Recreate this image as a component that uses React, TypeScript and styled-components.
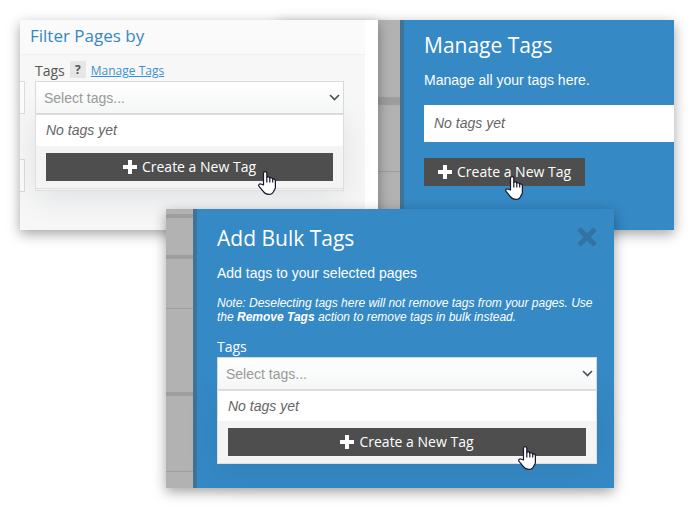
import React from "react";
import styled, { createGlobalStyle } from "styled-components";

const GlobalStyle = createGlobalStyle`
  * { box-sizing: border-box; }
  body {
    margin: 0;
    background: #fff;
    color: #555;
    font: 14px/20px "Liberation Sans", Arial, sans-serif;
  }
  h2, p { margin: 0; }
`;

const display = `"Open Sans", "Noto Sans", sans-serif`;

const Stage = styled.main`
  display: grid;
  grid-template-columns: 146fr 112fr 100fr 236fr 60fr;
  grid-template-rows: auto 21px auto;
  padding: 20px;
`;

const panelShadow = "0 4px 12px rgba(0, 0, 0, 0.36)";

const FilterPanel = styled.section`
  grid-column: 1 / 4;
  grid-row: 1 / 3;
  z-index: 1;
  display: flex;
  overflow: hidden;
  background: #fff;
  box-shadow: ${panelShadow};
`;

const FilterMain = styled.div`
  flex: 1;
  margin-right: 13px;
  background: #f7f7f7;
`;

const FilterTitle = styled.h2`
  height: 35px;
  padding: 0 10px;
  border-bottom: 1px solid #f0f0f0;
  background: #fafafa;
  color: #3588c4;
  font: 400 17px/32px ${display};
`;

const FilterBody = styled.div`
  display: flex;
  gap: 10px;
  padding: 0 21px 38px 0;
`;

const Neighbours = styled.div`
  display: flex;
  flex-direction: column;
  gap: 45px;
  width: 5px;
  padding-top: 26px;
`;

const FieldEdge = styled.div`
  height: 33px;
  border: 1px solid #dcdcdc;
  border-left: 0;
  background: #fcfcfc;
`;

const Field = styled.div`
  flex: 1;
`;

const LabelRow = styled.div`
  display: flex;
  align-items: center;
  gap: 5px;
  height: 26px;
  padding-top: 6px;
`;

const FieldLabel = styled.label`
  font: 400 14px/20px ${display};
`;

const Help = styled.button`
  width: 16px;
  height: 17px;
  margin-bottom: 3px;
  padding: 0;
  border: 0;
  background: #e6e6e6;
  color: #555;
  font: 700 12px/17px ${display};
`;

const ManageLink = styled.a`
  color: #3c91d4;
  font: 400 12px/20px ${display};
`;

const SelectWrap = styled.div`
  position: relative;
`;

const TagSelect = styled.select`
  display: block;
  width: 100%;
  height: 33px;
  padding: 0 8px;
  border: 1px solid #d8dadb;
  border-radius: 0;
  background: linear-gradient(#fff, #f5f6f6);
  color: #999;
  font: 14px/20px "Liberation Sans", Arial, sans-serif;
  appearance: none;
`;

const Chevron = styled.svg`
  position: absolute;
  top: 13px;
  right: 4px;
  width: 11px;
  height: 7px;
  pointer-events: none;
`;

const Dropdown = styled.div`
  border: 1px solid #dedede;
  background: #f4f4f4;
  box-shadow: 0 6px 32px rgba(40, 60, 70, 0.12);
`;

const Empty = styled.p<{ $size: "snug" | "normal" | "roomy" }>`
  padding: ${(p) =>
    ({ snug: "5px 10px", normal: "5px 10px 6px", roomy: "8px 10px 9px" })[p.$size]};
  background: #fff;
  color: #666;
  font-style: italic;
`;

const DropdownFoot = styled.div<{ $framed?: boolean }>`
  padding: 7px 10px;
  border-bottom: ${(p) => (p.$framed ? "1px solid #dedede" : "0")};
  margin-bottom: ${(p) => (p.$framed ? "1px" : "0")};
`;

const CreateButton = styled.button<{ $wide?: boolean }>`
  position: relative;
  display: flex;
  align-items: center;
  justify-content: center;
  gap: 5px;
  width: ${(p) => (p.$wide ? "100%" : "auto")};
  height: 28px;
  padding: 0 14px;
  border: 0;
  background: #4e4e4e;
  color: #fff;
  font: 400 14px/28px ${display};
  white-space: nowrap;
`;

const Cursor = styled.svg<{ $right: number }>`
  position: absolute;
  top: 18px;
  right: ${(p) => p.$right}px;
  z-index: 2;
  width: 18px;
  height: 24px;
`;

const ManagePanel = styled.section`
  grid-column: 3 / 6;
  grid-row: 1 / 3;
  display: flex;
  box-shadow: ${panelShadow};
`;

const BulkPanel = styled.section`
  grid-column: 2 / 5;
  grid-row: 2 / 4;
  z-index: 2;
  display: flex;
  box-shadow: ${panelShadow};
`;

const Backdrop = styled.div<{ $width: number }>`
  display: flex;
  flex-direction: column;
  flex: none;
  width: ${(p) => p.$width}px;
  background: #b2b2b2;
`;

const BackdropRow = styled.div<{ $height: number; $line: number }>`
  height: ${(p) => p.$height}px;
  border-bottom: ${(p) => p.$line}px solid #9e9e9e;
`;

const Sheet = styled.div<{ $top: number; $right: number }>`
  flex: 1;
  padding: ${(p) => p.$top}px ${(p) => p.$right}px 24px 20px;
  border-left: 4px solid #3f7397;
  background: #3589c5;
  color: #fff;
`;

const SheetHead = styled.div`
  display: flex;
  align-items: flex-start;
  justify-content: space-between;
`;

const SheetTitle = styled.h2`
  font: 400 21px/28px ${display};
`;

const Lead = styled.p`
  margin-top: 11px;
`;

const Note = styled.p`
  margin-top: 13px;
  font-size: 12px;
  line-height: 14px;
  font-style: italic;
`;

const SheetLabel = styled(FieldLabel)`
  display: block;
  margin-top: 13px;
`;

const TagList = styled.div`
  margin: 15px 0 16px;
`;

const CloseButton = styled.button`
  display: flex;
  margin-top: 3px;
  padding: 0;
  border: 0;
  background: none;
`;

const Plus = () => (
  <svg width="14" height="14" viewBox="0 0 14 14" aria-hidden="true">
    <path d="M5 0h4v5h5v4H9v5H5V9H0V5h5z" fill="#fff" />
  </svg>
);

const Hand = ({ right }: { right: number }) => (
  <Cursor $right={right} viewBox="0 0 18 24" aria-hidden="true">
    <path
      d="M5.5 14V2.2C5.5.2 8.8.2 8.8 2.2V6.5C9.6 5.3 11.7 5.7 11.8 7.1C12.8 6.3 14.5 6.8 14.7 8.1C15.8 7.5 17.4 8.2 17.4 9.8V16.4C17.4 17.6 16.6 18.5 16 19.6C15.1 22.2 13.2 23.4 10.8 23.4C8.4 23.4 6.7 22.6 5.4 20.7L1.1 15.4C-.2 13.4 2 12.2 3.5 13.2Z"
      fill="#fff"
      stroke="#16182b"
      strokeWidth="1.2"
      strokeLinejoin="round"
    />
    <path
      d="M8.8 6.3V11.5M11.8 7V11.5M14.7 8V11.5"
      fill="none"
      stroke="#16182b"
      strokeWidth="1.2"
    />
  </Cursor>
);

const Create = ({ wide, cursor }: { wide?: boolean; cursor: number }) => (
  <CreateButton type="button" $wide={wide}>
    <Plus />
    Create a New Tag
    <Hand right={cursor} />
  </CreateButton>
);

const TagPicker = ({ id }: { id: string }) => (
  <SelectWrap>
    <TagSelect id={id}>
      <option>Select tags...</option>
    </TagSelect>
    <Chevron viewBox="0 0 11 7" aria-hidden="true">
      <path d="M1 1l4.5 4.5L10 1" fill="none" stroke="#44525e" strokeWidth="1.6" />
    </Chevron>
  </SelectWrap>
);

export default function App() {
  return (
    <>
      <GlobalStyle />
      <Stage>
        <FilterPanel>
          <FilterMain>
            <FilterTitle>Filter Pages by</FilterTitle>
            <FilterBody>
              <Neighbours>
                <FieldEdge />
                <FieldEdge />
              </Neighbours>
              <Field>
                <LabelRow>
                  <FieldLabel htmlFor="filter-tags">Tags</FieldLabel>
                  <Help type="button">?</Help>
                  <ManageLink href="#manage">Manage Tags</ManageLink>
                </LabelRow>
                <TagPicker id="filter-tags" />
                <Dropdown>
                  <Empty $size="normal">No tags yet</Empty>
                  <DropdownFoot $framed>
                    <Create wide cursor={57} />
                  </DropdownFoot>
                </Dropdown>
              </Field>
            </FilterBody>
          </FilterMain>
        </FilterPanel>

        <ManagePanel id="manage">
          <Backdrop $width={122}>
            <BackdropRow $height={85} $line={8} />
            <BackdropRow $height={67} $line={1} />
          </Backdrop>
          <Sheet $top={11} $right={0}>
            <SheetTitle>Manage Tags</SheetTitle>
            <Lead>Manage all your tags here.</Lead>
            <TagList>
              <Empty $size="roomy">No tags yet</Empty>
            </TagList>
            <Create cursor={62} />
          </Sheet>
        </ManagePanel>

        <BulkPanel>
          <Backdrop $width={27}>
            <BackdropRow $height={9} $line={4} />
            <BackdropRow $height={41} $line={4} />
            <BackdropRow $height={50} $line={1} />
            <BackdropRow $height={87} $line={4} />
            <BackdropRow $height={76} $line={1} />
          </Backdrop>
          <Sheet $top={15} $right={17}>
            <SheetHead>
              <SheetTitle>Add Bulk Tags</SheetTitle>
              <CloseButton type="button" aria-label="Close">
                <svg width="20" height="20" viewBox="0 0 20 20" aria-hidden="true">
                  <path d="M2 2l16 16M18 2L2 18" stroke="#3273a4" strokeWidth="5" />
                </svg>
              </CloseButton>
            </SheetHead>
            <Lead>Add tags to your selected pages</Lead>
            <Note>
              Note: Deselecting tags here will not remove tags from your pages. Use the{" "}
              <b>Remove Tags</b> action to remove tags in bulk instead.
            </Note>
            <SheetLabel htmlFor="bulk-tags">Tags</SheetLabel>
            <TagPicker id="bulk-tags" />
            <Dropdown>
              <Empty $size="snug">No tags yet</Empty>
              <DropdownFoot>
                <Create wide cursor={50} />
              </DropdownFoot>
            </Dropdown>
          </Sheet>
        </BulkPanel>
      </Stage>
    </>
  );
}
